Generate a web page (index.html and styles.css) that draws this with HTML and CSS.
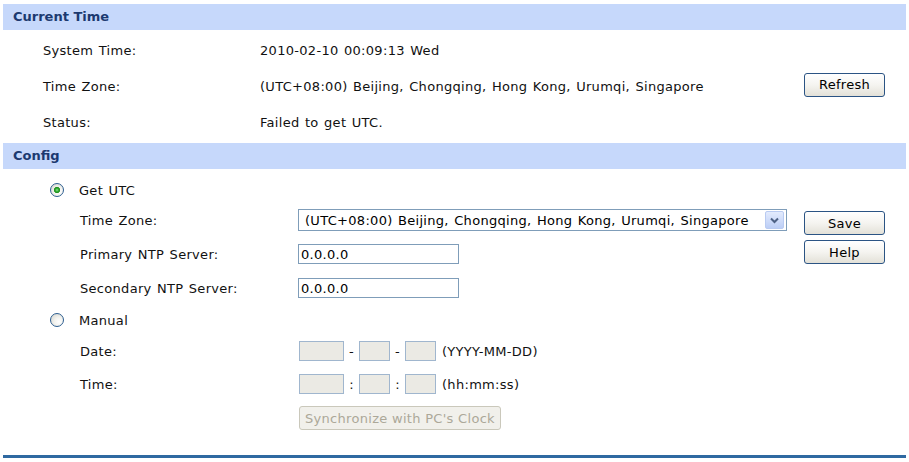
FILE: index.html
```
<!DOCTYPE html>
<html lang="en">
<head>
<meta charset="utf-8">
<title>Time Settings</title>
<link rel="stylesheet" href="styles.css">
</head>
<body>
<div class="page">
  <section class="panel">
    <h2 class="bar">Current Time</h2>
    <div class="info">
      <div class="lbl">System Time:</div>
      <div class="val">2010-02-10 00:09:13 Wed</div>
      <div class="act"></div>
      <div class="lbl">Time Zone:</div>
      <div class="val">(UTC+08:00) Beijing, Chongqing, Hong Kong, Urumqi, Singapore</div>
      <div class="act"><button class="btn" type="button">Refresh</button></div>
      <div class="lbl">Status:</div>
      <div class="val">Failed to get UTC.</div>
      <div class="act"></div>
    </div>
  </section>

  <section class="panel">
    <h2 class="bar">Config</h2>
    <div class="config">
      <div class="form">
        <label class="radio-row"><input class="radio" type="radio" name="mode" checked><span>Get UTC</span></label>

        <div class="lbl">Time Zone:</div>
        <div class="ctl">
          <div class="select-wrap">
            <select class="select">
              <option>(UTC+08:00) Beijing, Chongqing, Hong Kong, Urumqi, Singapore</option>
            </select>
            <span class="arrow"><svg width="9" height="7" viewBox="0 0 9 7"><path d="M1 1.5 L4.5 5 L8 1.5" fill="none" stroke="#4d6185" stroke-width="2"/></svg></span>
          </div>
        </div>

        <div class="lbl">Primary NTP Server:</div>
        <div class="ctl"><input class="text" type="text" value="0.0.0.0"></div>

        <div class="lbl">Secondary NTP Server:</div>
        <div class="ctl"><input class="text" type="text" value="0.0.0.0"></div>

        <label class="radio-row"><input class="radio" type="radio" name="mode"><span>Manual</span></label>

        <div class="lbl">Date:</div>
        <div class="ctl parts">
          <input class="part wide" type="text" disabled><span class="sep">-</span><input class="part" type="text" disabled><span class="sep">-</span><input class="part" type="text" disabled><span class="hint">(YYYY-MM-DD)</span>
        </div>

        <div class="lbl">Time:</div>
        <div class="ctl parts">
          <input class="part wide" type="text" disabled><span class="sep">:</span><input class="part" type="text" disabled><span class="sep">:</span><input class="part" type="text" disabled><span class="hint">(hh:mm:ss)</span>
        </div>

        <div class="lbl"></div>
        <div class="ctl"><button class="sync" type="button" disabled>Synchronize with PC's Clock</button></div>
      </div>
      <div class="side">
        <button class="btn" type="button">Save</button>
        <button class="btn" type="button">Help</button>
      </div>
    </div>
  </section>

  <div class="rule"></div>
</div>
</body>
</html>
```

FILE: styles.css
```
html, body {
  margin: 0;
  padding: 0;
  background: #fff;
}

body {
  font-family: "DejaVu Sans", Verdana, sans-serif;
  font-size: 13px;
  color: #111;
  letter-spacing: 0.3px;
  word-spacing: 1px;
}

.page {
  padding: 4px 3px 0 3px;
}

.bar {
  margin: 0;
  height: 26px;
  line-height: 26px;
  padding-left: 10px;
  background: #c6d8fb;
  color: #1c3a70;
  font-size: 13px;
  font-weight: bold;
  letter-spacing: 0;
  word-spacing: 0;
}

.info {
  display: grid;
  grid-template-columns: 217px 544px 81px;
  grid-auto-rows: 36px;
  align-items: center;
  padding: 2px 0 3px 40px;
}

.btn {
  width: 81px;
  height: 24px;
  margin: 0;
  padding: 0;
  border: 1px solid #2b5484;
  border-radius: 3px;
  background: linear-gradient(#ffffff 0%, #f5f4f0 50%, #e3e1d8 100%);
  font-family: "DejaVu Sans", Verdana, sans-serif;
  font-size: 13px;
  color: #000;
  letter-spacing: 0.3px;
}

.info .btn {
  margin-top: -3px;
}

.config {
  display: flex;
  padding-top: 8px;
}

.form {
  width: 801px;
  display: grid;
  grid-template-columns: 77px 218px 1fr;
  grid-template-rows: 26px 34px 34px 34px 30px 32px 34px 34px;
  align-items: center;
}

.radio-row {
  grid-column: 1 / -1;
  display: flex;
  align-items: center;
  gap: 15px;
  padding-left: 47px;
}

.form .lbl {
  grid-column: 2;
}

.ctl {
  grid-column: 3;
}

.radio {
  appearance: none;
  -webkit-appearance: none;
  width: 14px;
  height: 14px;
  margin: 0;
  border: 1.5px solid #2c5d90;
  border-radius: 50%;
  background: radial-gradient(circle at 65% 65%, #ffffff 0, #f2f2ee 40%, #d3d2c9 100%);
}

.radio:checked {
  background:
    radial-gradient(circle at 50% 50%, #8ae68a 0, #2aa42a 1.8px, #1e8f1e 2.8px, transparent 3.4px),
    radial-gradient(circle at 65% 65%, #ffffff 0, #f2f2ee 40%, #d3d2c9 100%);
}

.select-wrap {
  position: relative;
  width: 489px;
  height: 22px;
}

.select {
  appearance: none;
  -webkit-appearance: none;
  width: 489px;
  height: 22px;
  margin: 0;
  padding: 0 0 0 6px;
  border: 1px solid #7f9db9;
  border-radius: 0;
  background: #fff;
  font-family: "DejaVu Sans", Verdana, sans-serif;
  font-size: 13px;
  color: #000;
  letter-spacing: 0.3px;
  word-spacing: 1px;
}

.arrow {
  position: absolute;
  top: 2px;
  right: 3px;
  width: 17px;
  height: 16px;
  border: 1px solid #b9cbf2;
  border-radius: 2px;
  background: linear-gradient(#e3ebfd, #bccef6);
  display: flex;
  align-items: center;
  justify-content: center;
  pointer-events: none;
}

.text {
  box-sizing: border-box;
  width: 161px;
  height: 20px;
  margin: 0;
  padding: 0 2px;
  border: 1px solid #7f9db9;
  font-family: "DejaVu Sans", Verdana, sans-serif;
  font-size: 13px;
  color: #000;
  letter-spacing: 0.3px;
}

.parts {
  display: flex;
  align-items: center;
  padding-left: 1px;
}

.part {
  box-sizing: border-box;
  width: 31px;
  height: 20px;
  margin: 0;
  padding: 0;
  border: 1px solid #a0b6ce;
  background: #ebeae4;
}

.part.wide {
  width: 45px;
}

.sep {
  width: 15px;
  text-align: center;
}

.hint {
  margin-left: 6px;
}

.sync {
  height: 24px;
  margin: 0 0 0 1px;
  padding: 0 5px;
  border: 1px solid #cac8bb;
  border-radius: 3px;
  background: #f1f0eb;
  color: #aca899;
  font-family: "DejaVu Sans", Verdana, sans-serif;
  font-size: 13px;
  letter-spacing: 0.3px;
  word-spacing: 0;
}

.side {
  width: 81px;
  display: flex;
  flex-direction: column;
  gap: 5px;
  padding-top: 34px;
}

.rule {
  margin-top: 20px;
  height: 3px;
  background: #2f69a1;
}
```
